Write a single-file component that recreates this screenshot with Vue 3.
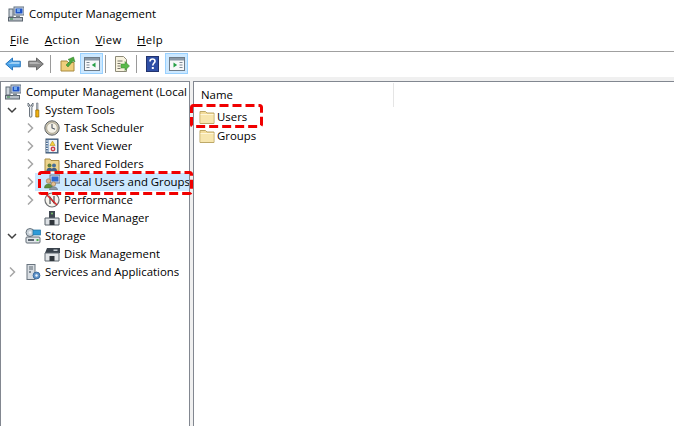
<script setup>
const menus = [
  { key: 'F', rest: 'ile' },
  { key: 'A', rest: 'ction' },
  { key: 'V', rest: 'iew' },
  { key: 'H', rest: 'elp' }
]
const rows = [
  { label: 'Computer Management (Local', icon: 'computer', level: 0, exp: '' },
  { label: 'System Tools', icon: 'tools', level: 1, exp: 'open' },
  { label: 'Task Scheduler', icon: 'clock', level: 2, exp: 'closed' },
  { label: 'Event Viewer', icon: 'event', level: 2, exp: 'closed' },
  { label: 'Shared Folders', icon: 'shared', level: 2, exp: 'closed' },
  { label: 'Local Users and Groups', icon: 'users', level: 2, exp: 'closed', selected: true },
  { label: 'Performance', icon: 'perf', level: 2, exp: 'closed' },
  { label: 'Device Manager', icon: 'device', level: 2, exp: '' },
  { label: 'Storage', icon: 'storage', level: 1, exp: 'open' },
  { label: 'Disk Management', icon: 'disk', level: 2, exp: '' },
  { label: 'Services and Applications', icon: 'services', level: 1, exp: 'closed' }
]
</script>

<template>
  <div class="app">
    <svg class="defs" width="0" height="0" aria-hidden="true">
      <defs>
        <symbol id="computer" viewBox="0 0 16 16">
          <rect x="6" y="1" width="10" height="8" fill="#d5dce4" stroke="#5f6f80" />
          <rect x="7.500" y="2.500" width="7" height="5" fill="#1f55c8" />
          <rect x="9" y="3" width="3" height="3" fill="#6fa8ee" />
          <rect x="1" y="3" width="4" height="8" fill="#cfd6dd" stroke="#5f6b76" />
          <rect x="0.500" y="11.500" width="14" height="3.500" fill="#b6bec6" stroke="#59636d" />
          <path d="M8 9.500h4v2H8z" fill="#7d8892" />
          <path d="M2 13h3" stroke="#2c8a3c" />
        </symbol>
        <symbol id="tools" viewBox="0 0 16 16">
          <path d="M3 1v3l1.500 1.500V14a1.200 1.200 0 0 0 2.400 0V5.500L8 4V1L6.600 2.500v1.500H4.600V2.500z" fill="#e9ecef" stroke="#5c6670" stroke-width=".9" />
          <path d="M11.500 1h1.500v7h-1.500z" fill="#b9c0c7" stroke="#6b747d" stroke-width=".6" />
          <path d="M10.800 8h3v7h-3z" fill="#f2b20f" stroke="#9a6e05" stroke-width=".8" />
        </symbol>
        <symbol id="clock" viewBox="0 0 16 16">
          <circle cx="8" cy="8" r="7.200" fill="#c9c2ae" stroke="#5f6468" />
          <circle cx="8" cy="8" r="5.300" fill="#f5f2e8" stroke="#a29c8a" stroke-width=".7" />
          <path d="M8 4v4l3 1.200" fill="none" stroke="#4e5661" stroke-width="1.100" />
        </symbol>
        <symbol id="event" viewBox="0 0 16 16">
          <rect x="2" y="1" width="12" height="14" fill="#5b7ea6" stroke="#3f5670" />
          <rect x="4.500" y="2" width="8.500" height="12" fill="#eef2f6" />
          <path d="M2 3h2M2 5.500h2M2 8h2M2 10.500h2M2 13h2" stroke="#e6ecf2" />
          <path d="M8.500 3l2.600 4.500H5.900z" fill="#f6cf3a" stroke="#a98414" stroke-width=".5" />
          <circle cx="9" cy="11" r="2.400" fill="#cf3f4a" />
          <path d="M8 10l2 2M10 10l-2 2" stroke="#fff" stroke-width=".7" />
        </symbol>
        <symbol id="shared" viewBox="0 0 16 16">
          <path d="M1 3h5l1 1.500h8V15H1z" fill="#edd48c" stroke="#a98c45" />
          <circle cx="5.500" cy="9.500" r="2" fill="#5e7d3d" />
          <circle cx="10" cy="9.500" r="2" fill="#466f9c" />
          <path d="M2.500 15c0-2.500 1.500-3 3-3s3 .5 3 3zM7.500 15c0-2.500 1-3 2.500-3s3 .5 3 3z" fill="#3d5e86" />
        </symbol>
        <symbol id="users" viewBox="0 0 16 16">
          <rect x="6" y="1" width="10" height="8" fill="#d7dee6" stroke="#65768a" />
          <rect x="7.500" y="2.500" width="7" height="5" fill="#2f6bd0" />
          <circle cx="4.500" cy="7" r="2.300" fill="#d9b284" stroke="#8a6a43" stroke-width=".5" />
          <path d="M0.500 14c0-3 1.800-4 4-4s4 1 4 4z" fill="#5f8f3a" stroke="#3f652a" stroke-width=".5" />
          <circle cx="9.500" cy="10" r="2.200" fill="#e2be90" stroke="#8a6a43" stroke-width=".5" />
          <path d="M5.500 16c0-2.200 1.800-3.200 4-3.200s4 1 4 3.200z" fill="#8d9aa6" stroke="#566270" stroke-width=".5" />
        </symbol>
        <symbol id="perf" viewBox="0 0 16 16">
          <circle cx="8" cy="8" r="7" fill="#f7f5ee" stroke="#6d7074" stroke-width="1.200" />
          <path d="M6 12V5l4 6V4" fill="none" stroke="#3a3f46" stroke-width="1.100" />
          <path d="M3 3l10 10" stroke="#d62a2a" stroke-width="1.500" />
        </symbol>
        <symbol id="device" viewBox="0 0 16 16">
          <rect x="5" y="1" width="6" height="7" fill="#3e4650" />
          <circle cx="8" cy="3.500" r="1" fill="#79c36a" />
          <path d="M1 8h14v7H1z" fill="#dde1e5" stroke="#59626b" />
          <rect x="5.500" y="10" width="5" height="5" fill="#2f353b" />
        </symbol>
        <symbol id="storage" viewBox="0 0 16 16">
          <circle cx="5" cy="4.500" r="4" fill="#c9d2d9" stroke="#68737d" />
          <circle cx="5" cy="4.500" r="1.200" fill="#f1f4f6" />
          <rect x="8" y="2" width="7.500" height="5" fill="#2e9bd8" stroke="#1d6f9f" stroke-width=".7" />
          <rect x="1" y="9" width="14" height="6" rx="1" fill="#dfe4e8" stroke="#606b75" />
          <rect x="3" y="11" width="6" height="2" fill="#57626d" />
          <rect x="11.500" y="11" width="2" height="2" fill="#4fae4f" />
        </symbol>
        <symbol id="disk" viewBox="0 0 16 16">
          <path d="M3 2h13v5H1z" fill="#39424c" />
          <path d="M9.500 3.500h4v1.500h-4z" fill="#c5cbd1" />
          <path d="M1 7h14v8H1z" fill="#e2e5e8" stroke="#5f6871" />
          <rect x="5.500" y="10" width="5" height="5" fill="#2f353b" />
        </symbol>
        <symbol id="services" viewBox="0 0 16 16">
          <rect x="2" y="0.500" width="8" height="15" fill="#d8dde2" stroke="#69747f" />
          <path d="M4 3h4M4 5h4" stroke="#5d6873" />
          <rect x="4" y="7" width="2" height="2" fill="#7f8a94" />
          <circle cx="11.500" cy="11.500" r="3.400" fill="#5f93c9" stroke="#3c6ca0" />
          <circle cx="11.500" cy="11.500" r="1.200" fill="#eaf2fa" />
        </symbol>
        <symbol id="folder" viewBox="0 0 16 16">
          <path d="M1 4V2.500h5.500L8 4h7v10.500H1z" fill="#f3dc9a" stroke="#bda868" />
          <path d="M1.500 5.500h13v8.500h-13z" fill="#f7e6ae" />
          <path d="M1.500 5.500h13" stroke="#fff6d8" />
        </symbol>
      </defs>
    </svg>

    <header class="titlebar">
      <svg class="ico16"><use href="#computer" /></svg>
      <span>Computer Management</span>
    </header>

    <nav class="menubar">
      <span v-for="m in menus" :key="m.key" class="menu"><u>{{ m.key }}</u>{{ m.rest }}</span>
    </nav>

    <div class="toolbar">
      <svg class="tool arrow" viewBox="0 0 16 14">
        <path d="M0.700 7L7.500 1v3.200h7.800v5.600H7.500V13z" fill="#4da3e8" stroke="#2877bd" />
        <path d="M7 5h7.500v2H3z" fill="#9ed0f5" />
      </svg>
      <svg class="tool arrow fwd" viewBox="0 0 16 14">
        <path d="M15.300 7L8.500 1v3.200H.7v5.600h7.800V13z" fill="#8a8a8a" stroke="#666" />
        <path d="M9 5H1.500v2H13z" fill="#b4b4b4" />
      </svg>
      <i class="sep first"></i>
      <svg class="tool up" viewBox="0 0 16 16">
        <path d="M1 5h6l1 1.500h6V15H1z" fill="#f0cf7c" stroke="#a98a3e" />
        <path d="M6 9l4-4-2-1.500L13.500 1 15 6l-2-1-5 6z" fill="#4ea93f" stroke="#2f7a28" stroke-width=".5" />
      </svg>
      <button class="btn on first-btn">
        <svg viewBox="0 0 16 14" class="pane">
          <rect x=".5" y=".5" width="15" height="13" fill="#f7f8f9" stroke="#6f7c88" />
          <rect x="1" y="1" width="14" height="2.500" fill="#8a98a6" />
          <path d="M2.500 5.500h3M2.500 8h3M2.500 10.500h3" stroke="#7f8a95" />
          <path d="M11.500 5.500v5L7.800 8z" fill="#27a046" />
        </svg>
      </button>
      <i class="sep second"></i>
      <svg class="tool export" viewBox="0 0 16 16">
        <path d="M1.500 .5h8l3 3v12h-11z" fill="#f8f3df" stroke="#8d8a78" />
        <path d="M3.500 5h5M3.500 7.500h3M3.500 10h3M3.500 12.500h3" stroke="#77756a" />
        <path d="M7 8h4V5.500L15.500 10 11 14.500V12H7z" fill="#59b94a" stroke="#3a8a30" stroke-width=".5" />
      </svg>
      <i class="sep third"></i>
      <svg class="tool help" viewBox="0 0 13 16">
        <rect x=".5" y=".5" width="12" height="15" fill="#2f4fa6" stroke="#22336e" />
        <path d="M4 5.500C4 3.600 5 3 6.500 3S9 3.800 9 5.200C9 7 6.800 7.200 6.800 9.500" fill="none" stroke="#fff" stroke-width="1.600" />
        <rect x="5.800" y="11" width="2" height="2" fill="#fff" />
      </svg>
      <button class="btn on last-btn">
        <svg viewBox="0 0 16 14" class="pane">
          <rect x=".5" y=".5" width="15" height="13" fill="#f7f8f9" stroke="#6f7c88" />
          <rect x="1" y="1" width="14" height="2.500" fill="#8a98a6" />
          <path d="M10.500 5.500h3M10.500 8h3M10.500 10.500h3" stroke="#7f8a95" />
          <path d="M4.500 5.500v5L8.200 8z" fill="#27a046" />
        </svg>
      </button>
    </div>

    <main class="panes">
      <section class="tree">
        <div
          v-for="r in rows"
          :key="r.label"
          class="row"
          :class="[`lvl${r.level}`, { selected: r.selected }]"
        >
          <span class="exp">
            <svg v-if="r.exp === 'open'" viewBox="0 0 10 10"><path d="M1 3l4 4 4-4" fill="none" stroke="#404040" stroke-width="1.500" /></svg>
            <svg v-else-if="r.exp === 'closed'" viewBox="0 0 10 10"><path d="M3 .5l4.500 4.500L3 9.500" fill="none" stroke="#a6a6a6" stroke-width="1.500" /></svg>
          </span>
          <span class="cell" :class="{ hl: r.selected }">
            <svg class="ico16"><use :href="`#${r.icon}`" /></svg>
            <span class="label">{{ r.label }}</span>
          </span>
        </div>
      </section>

      <section class="list">
        <div class="list-head"><span class="col">Name</span></div>
        <div class="item"><svg class="ico16"><use href="#folder" /></svg><span>Users</span></div>
        <div class="item"><svg class="ico16"><use href="#folder" /></svg><span>Groups</span></div>
      </section>
    </main>

    <svg class="mark mark-tree" width="155" height="24" viewBox="0 0 155 24">
      <rect x="1.500" y="1.500" width="152" height="21" rx="2" fill="none" stroke="#f00000" stroke-width="3" stroke-dasharray="9 4" />
    </svg>
    <svg class="mark mark-list" width="73" height="24" viewBox="0 0 73 24">
      <rect x="1.500" y="1.500" width="70" height="21" rx="2" fill="none" stroke="#f00000" stroke-width="3" stroke-dasharray="9 4" />
    </svg>
  </div>
</template>

<style>
html, body { margin: 0; background: #fff; overflow: hidden; }
</style>

<style scoped>
.app {
  position: relative;
  width: 674px;
  height: 426px;
  overflow: hidden;
  background: #fff;
  color: #000;
  font: 11.4px/16px "Open Sans", "Noto Sans", sans-serif;
  display: flex;
  flex-direction: column;
}
.defs { position: absolute; }
.ico16 { width: 16px; height: 16px; flex: none; }
.titlebar {
  height: 28px;
  display: flex;
  align-items: center;
  gap: 5px;
  padding-left: 8px;
}
.menubar {
  height: 24px;
  padding: 1px 0 0 10px;
  box-sizing: border-box;
  display: flex;
  gap: 15.5px;
  align-items: center;
  border-bottom: 1px solid #a0a0a0;
  letter-spacing: .3px;
}
.toolbar {
  height: 23px;
  display: flex;
  align-items: center;
  padding-left: 5px;
  flex: none;
}
.tool { flex: none; }
.arrow { width: 16px; height: 14px; }
.fwd { margin-left: 7px; }
.sep { width: 1px; height: 18px; background: #9a9a9a; flex: none; }
.sep.first { margin: 0 9px 0 6px; }
.up { width: 16px; height: 16px; }
.btn {
  width: 23px;
  height: 21px;
  padding: 0;
  margin: 0;
  flex: none;
  display: flex;
  align-items: center;
  justify-content: center;
  background: #cce8ff;
  border: 1px solid #99d1ff;
  box-sizing: border-box;
}
.first-btn { margin-left: 4px; }
.pane { width: 16px; height: 14px; }
.sep.second { margin: 0 8px 0 2px; }
.export { width: 16px; height: 16px; }
.sep.third { margin: 0 9px 0 6px; }
.help { width: 13px; height: 16px; }
.last-btn { margin-left: 6px; }
.panes {
  flex: 1;
  min-height: 0;
  display: flex;
  background: #f0f0f0;
  padding-top: 4px;
  margin-top: 2px;
}
.tree {
  width: 190px;
  box-sizing: border-box;
  background: #fff;
  border: 1px solid #828790;
  border-bottom: 0;
  flex: none;
  padding-top: 1px;
  overflow: hidden;
}
.row {
  height: 18px;
  display: flex;
  align-items: center;
  white-space: nowrap;
}
.exp { width: 10px; height: 10px; flex: none; display: block; }
.exp svg { display: block; width: 10px; height: 10px; }
.lvl0 .exp { width: 4px; }
.lvl1 .exp { margin-left: 6px; }
.lvl2 .exp { margin-left: 24px; }
.cell { display: flex; align-items: center; height: 18px; flex: 1; min-width: 0; }
.lvl1 .cell { padding-left: 8px; }
.lvl2 .cell { padding-left: 9px; }
.label { margin-left: 5px; overflow: hidden; }
.lvl1 .label, .lvl2 .label { margin-left: 4px; }
.hl { background: #cce8ff; }
.list {
  flex: 1;
  margin-left: 3px;
  background: #fff;
  border: 1px solid #828790;
  border-width: 1px 0 0 1px;
}
.list-head { height: 25px; display: flex; }
.col {
  width: 200px;
  height: 24px;
  margin-top: 1px;
  padding-left: 7px;
  box-sizing: border-box;
  line-height: 24px;
  border-right: 1px solid #e5e5e5;
}
.item {
  height: 19px;
  display: flex;
  align-items: center;
  gap: 2px;
  padding-left: 5px;
}
.mark { position: absolute; }
.mark-tree { left: 38px; top: 171px; }
.mark-list { left: 190px; top: 104px; }
</style>
